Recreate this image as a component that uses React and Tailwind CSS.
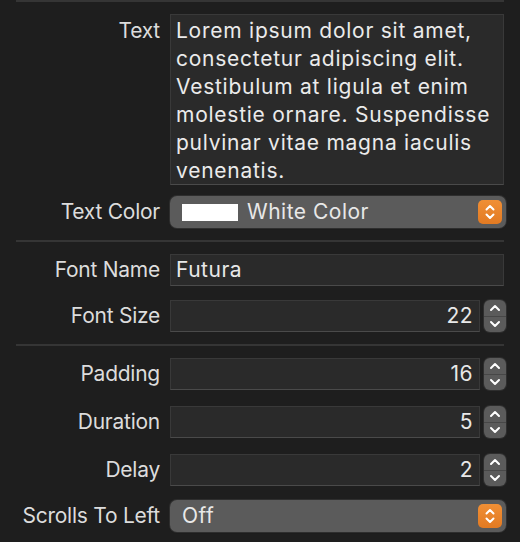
import React from 'react';

const font = { fontFamily: 'Inter, "Noto Sans", sans-serif' };

const UpDown = () => (
  <svg width="24" height="24" viewBox="0 0 24 24" fill="none" stroke="#fff" strokeWidth="2" strokeLinecap="round" strokeLinejoin="round">
    <path d="M8.5 9.5 L12 6 L15.5 9.5" />
    <path d="M8.5 14.5 L12 18 L15.5 14.5" />
  </svg>
);

const Label = ({ children, top }) => (
  <div className={`w-[144px] shrink-0 text-right text-[21px] tracking-[-0.25px] text-[#dcdcdc] ${top ? 'self-start leading-[28px] pt-[3px]' : ''}`}>
    {children}
  </div>
);

const Popup = ({ children }) => (
  <div className="flex-1 h-[32px] flex items-center rounded-[7px] bg-[#5b5b5b] shadow-[0_0_0_1px_#2e2e2e,0_1px_1px_rgba(0,0,0,0.4)]">
    <div className="flex-1 flex items-center pl-[12px] text-[21px] tracking-[0.5px] text-[#e8e8e8]">{children}</div>
    <div className="w-[24px] h-[24px] mr-[4px] rounded-[5px] bg-gradient-to-b from-[#f08f35] to-[#e27a22] flex items-center justify-center">
      <UpDown />
    </div>
  </div>
);

const Field = ({ children, right }) => (
  <div className={`flex-1 h-[32px] flex items-center bg-[#2a2a2a] border border-[#393939] border-b-[#4a4a4a] px-[5px] text-[21px] tracking-[0.5px] text-[#e8e8e8] ${right ? 'justify-end pr-[6px]' : ''}`}>
    {children}
  </div>
);

const Stepper = ({ value }) => (
  <div className="flex-1 flex items-center gap-[4px]">
    <Field right>{value}</Field>
    <div className="w-[22px] h-[32px] rounded-[6px] bg-[#5b5b5b] flex flex-col items-center shadow-[0_0_0_1px_#2e2e2e]">
      <div className="flex-1 w-full flex items-center justify-center">
        <svg width="14" height="10" viewBox="0 0 14 10" fill="none" stroke="#fff" strokeWidth="2" strokeLinecap="round" strokeLinejoin="round">
          <path d="M3 7 L7 3 L11 7" />
        </svg>
      </div>
      <div className="h-px w-full bg-[#474747]" />
      <div className="flex-1 w-full flex items-center justify-center">
        <svg width="14" height="10" viewBox="0 0 14 10" fill="none" stroke="#fff" strokeWidth="2" strokeLinecap="round" strokeLinejoin="round">
          <path d="M3 3 L7 7 L11 3" />
        </svg>
      </div>
    </div>
  </div>
);

const Row = ({ label, children, className = '' }) => (
  <div className={`flex items-center gap-[10px] ${className}`}>
    <Label>{label}</Label>
    {children}
  </div>
);

const Sep = ({ className = '' }) => <div className={`h-[2px] bg-[#353535] mr-[2px] ${className}`} />;

export default function App() {
  return (
    <div className="w-[520px] h-[542px] bg-[#1e1e1e] overflow-hidden" style={font}>
      <div className="pl-[16px] pr-[14px] flex flex-col">
        <Sep />
        <div className="flex gap-[10px] mt-[12px]">
          <Label top>Text</Label>
          <div className="flex-1 mr-[2px] h-[171px] bg-[#2a2a2a] border border-[#393939] border-b-[#4a4a4a] pl-[5px] pr-[2px] pt-[2px] text-[21px] leading-[28px] tracking-[0.75px] text-[#ebebeb]">
            Lorem ipsum dolor sit amet, consectetur adipiscing elit. Vestibulum at ligula et enim molestie ornare. Suspendisse pulvinar vitae magna iaculis venenatis.
          </div>
        </div>
        <Row label="Text Color" className="mt-[11px]">
          <Popup>
            <span className="w-[56px] h-[17px] bg-white mr-[9px]" />
            White Color
          </Popup>
        </Row>
        <Sep className="mt-[12px]" />
        <Row label="Font Name" className="mt-[12px] mr-[2px]">
          <Field>Futura</Field>
        </Row>
        <Row label="Font Size" className="mt-[14px]">
          <Stepper value="22" />
        </Row>
        <Sep className="mt-[12px]" />
        <Row label="Padding" className="mt-[12px]">
          <Stepper value="16" />
        </Row>
        <Row label="Duration" className="mt-[16px]">
          <Stepper value="5" />
        </Row>
        <Row label="Delay" className="mt-[16px]">
          <Stepper value="2" />
        </Row>
        <Row label="Scrolls To Left" className="mt-[14px]">
          <Popup>Off</Popup>
        </Row>
      </div>
    </div>
  );
}
